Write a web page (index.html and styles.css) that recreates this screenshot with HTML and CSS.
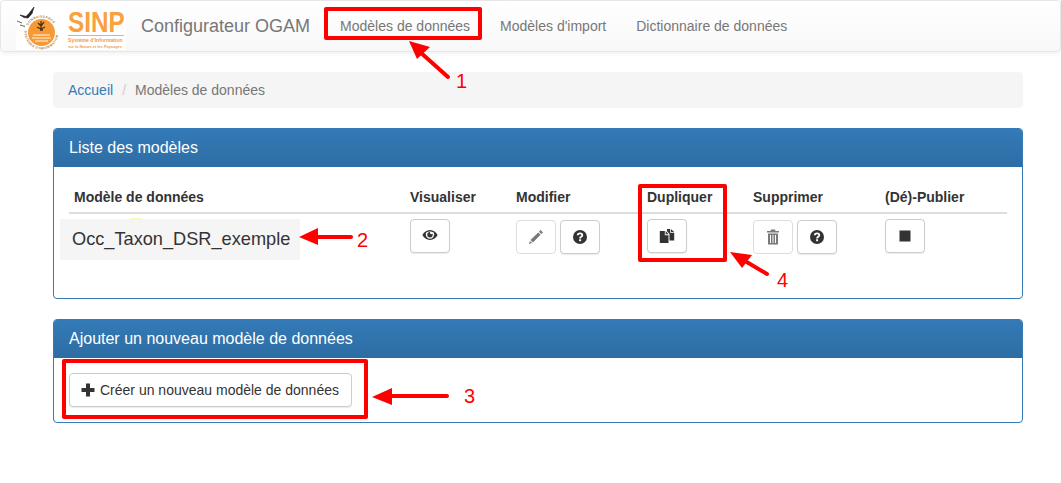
FILE: index.html
```html
<!DOCTYPE html>
<html lang="fr">
<head>
    <meta charset="UTF-8">
    <meta name="viewport" content="width=device-width, initial-scale=1.0">
    <title>Configurateur OGAM</title>
    <link rel="stylesheet" href="styles.css">
</head>
<body>

<svg class="icon-defs" width="0" height="0">
    <symbol id="i-eye" viewBox="0 0 16 16">
        <path fill-rule="evenodd" d="M8 3C4.600 3 1.900 5.200.4 8c1.500 2.800 4.200 5 7.600 5s6.100-2.200 7.600-5C14.100 5.200 11.400 3 8 3zm0 1.400c1.400 0 2.600.4 3.700 1.100.3.700.5 1.400.5 2.100a4.200 4.200 0 0 1-8.400 0c0-.7.2-1.400.5-2.100C5.400 4.800 6.600 4.400 8 4.400z"/>
        <path d="M8 5a2.700 2.700 0 1 0 2.700 2.700c0-.5-.1-.9-.4-1.300-.2.500-.6.800-1.100.8-.7 0-1.200-.6-1.200-1.200 0-.4.1-.7.4-1H8z"/>
    </symbol>
    <symbol id="i-pencil" viewBox="0 0 16 16">
        <path d="M12.600 1L15 3.400l-1.700 1.700-2.400-2.400zM10.200 3.400l2.400 2.400-7.700 7.700-2.400-2.400zM1.900 11.900l2.200 2.200-3.100.9z"/>
    </symbol>
    <symbol id="i-help" viewBox="0 0 16 16">
        <circle cx="8" cy="8" r="7"/>
        <path d="M5.700 6.200C5.800 4.900 6.800 4.300 8 4.300c1.300 0 2.300.7 2.300 1.900 0 1.700-2.200 1.600-2.200 3.200" fill="none" stroke="#fff" stroke-width="1.800"/>
        <rect x="7.100" y="10.300" width="2" height="1.900" fill="#fff"/>
    </symbol>
    <symbol id="i-duplicate" viewBox="0 0 16 16">
        <path d="M.8 3h5v4.200h3.700V15H.8z"/>
        <path d="M6.600 3l2.900 3.200H6.600z"/>
        <path d="M8 1h3v3.800h4.200V12.500h-4.700V6L8 3.200z"/>
        <path d="M11.800 1l3.400 3H11.800z"/>
    </symbol>
    <symbol id="i-trash" viewBox="0 0 16 16">
        <path d="M6 .5h4l.5 1.500H14v1.500H2V2h3.500z"/>
        <path fill-rule="evenodd" d="M3 4.400h10V15.500H3zM5 6v8h1V6zm2.500 0v8h1V6zM10 6v8h1V6z"/>
    </symbol>
    <symbol id="i-stop" viewBox="0 0 16 16">
        <rect x="2.500" y="2.500" width="11" height="11"/>
    </symbol>
    <symbol id="i-plus" viewBox="0 0 16 16">
        <path d="M6 1.500h4V6h4.500v4H10v4.500H6V10H1.500V6H6z"/>
    </symbol>
</svg>

<nav class="navbar">
    <a class="brand-logo" href="#">
        <svg width="110" height="48" viewBox="0 0 110 48">
            <defs>
                <path id="ring-top" d="M10.500 30.500a15 15 0 0 1 30 0"/>
                <path id="ring-bottom" d="M9.500 24.700A17 17 0 1 0 41.500 24.700"/>
            </defs>
            <rect width="110" height="48" fill="#fff"/>
            <circle cx="25.500" cy="30.500" r="13.500" fill="#f79a35"/>
            <path d="M25 19v9M22 21l3 3 3-4M21 25l4 2 4-2M24 28h3" fill="none" stroke="#4a3418" stroke-width="1.300"/>
            <path d="M17 33h17M16 36h19M19 39h13" stroke="#fff" stroke-width=".9"/>
            <path d="M4 13l6 1.500 3-3 5-6.500-2 6.500-4 4.500-4-.5zM1 19l5 2M4 23l5 1.500" fill="#222" stroke="#222" stroke-width=".7"/>
            <text class="logo-ring"><textPath href="#ring-top" startOffset="7">CONNAISSANCE</textPath><textPath href="#ring-bottom" startOffset="4">SYSTÈMES D'INFORMATION</textPath></text>
            <text class="logo-sinp" transform="translate(52 30) scale(.81 1)">SINP</text>
            <rect x="52" y="33" width="56" height=".8" fill="#f79a35"/>
            <text class="logo-sub" x="52" y="40">Système d'Information</text>
            <text class="logo-small" x="52" y="45.500">sur la Nature et les Paysages</text>
        </svg>
    </a>
    <a class="brand" href="#">Configurateur OGAM</a>
    <ul class="nav-links">
        <li><a href="#">Modèles de données</a></li>
        <li><a href="#">Modèles d'import</a></li>
        <li><a href="#">Dictionnaire de données</a></li>
    </ul>
</nav>

<main class="container">
    <ol class="breadcrumb">
        <li><a href="#">Accueil</a></li>
        <li class="crumb-sep">/</li>
        <li class="crumb-current">Modèles de données</li>
    </ol>

    <section class="panel">
        <h3 class="panel-heading">Liste des modèles</h3>
        <div class="panel-body">
            <table class="models">
                <thead>
                    <tr>
                        <th class="col-name">Modèle de données</th>
                        <th class="col-view">Visualiser</th>
                        <th class="col-edit">Modifier</th>
                        <th class="col-copy">Dupliquer</th>
                        <th class="col-del">Supprimer</th>
                        <th>(Dé)-Publier</th>
                    </tr>
                </thead>
                <tbody>
                    <tr>
                        <td><div class="model-name"><span class="model-dot"></span>Occ_Taxon_DSR_exemple</div></td>
                        <td><div class="btns"><a class="btn" href="#"><svg class="icon icon-eye"><use href="#i-eye"/></svg></a></div></td>
                        <td><div class="btns btns-low">
                            <a class="btn btn-off" href="#"><svg class="icon"><use href="#i-pencil"/></svg></a>
                            <a class="btn" href="#"><svg class="icon"><use href="#i-help"/></svg></a>
                        </div></td>
                        <td><div class="btns"><a class="btn" href="#"><svg class="icon"><use href="#i-duplicate"/></svg></a></div></td>
                        <td><div class="btns btns-low">
                            <a class="btn btn-off" href="#"><svg class="icon"><use href="#i-trash"/></svg></a>
                            <a class="btn" href="#"><svg class="icon"><use href="#i-help"/></svg></a>
                        </div></td>
                        <td><div class="btns"><a class="btn" href="#"><svg class="icon"><use href="#i-stop"/></svg></a></div></td>
                    </tr>
                </tbody>
            </table>
        </div>
    </section>

    <section class="panel">
        <h3 class="panel-heading">Ajouter un nouveau modèle de données</h3>
        <div class="panel-body">
            <a class="btn btn-text" href="#"><svg class="icon"><use href="#i-plus"/></svg>Créer un nouveau modèle de données</a>
        </div>
    </section>
</main>

<!-- annotations rouges par dessus la capture -->
<svg class="notes" width="1061" height="483" viewBox="0 0 1061 483">
    <g class="note-box">
        <rect x="326" y="9" width="154" height="29"/>
        <rect x="640" y="186" width="85" height="74"/>
        <rect x="64" y="361" width="302" height="56"/>
    </g>
    <g class="note-line">
        <path d="M420 52L448 77"/>
        <path d="M315 237H351"/>
        <path d="M388 396H447"/>
        <path d="M745 261L767 274"/>
    </g>
    <g class="note-head">
        <path d="M409 41L430 47L417 59z"/>
        <path d="M299 237L318 228V245z"/>
        <path d="M372 397L392 388V405z"/>
        <path d="M730 252L752 255L742 268z"/>
    </g>
    <text class="note-num" x="456" y="88">1</text>
    <text class="note-num" x="357" y="247">2</text>
    <text class="note-num" x="464" y="403">3</text>
    <text class="note-num" x="777" y="287">4</text>
</svg>

</body>
</html>
```

FILE: styles.css
```css
body {
    font-family: "Liberation Sans", Arial, sans-serif;
    font-size: 14px;
    line-height: 20px;
    margin: 0;
    padding: 0;
    background-color: #fff;
    color: #333;
}
a {
    text-decoration: none;
}
.icon-defs {
    position: absolute;
}

/* navbar */
.navbar {
    display: flex;
    align-items: center;
    box-sizing: border-box;
    height: 52px;
    margin-bottom: 20px;
    padding-left: 15px;
    background: linear-gradient(to bottom, #fff 0%, #f8f8f8 100%);
    border: 1px solid #e7e7e7;
    border-radius: 4px;
    box-shadow: 0 1px 5px rgba(0, 0, 0, .075);
}
.brand-logo {
    display: flex;
    width: 110px;
    height: 48px;
}
.logo-ring {
    font-size: 3.200px;
    font-weight: bold;
    letter-spacing: .4px;
    fill: #a5784a;
}
.logo-sinp {
    font-size: 30px;
    font-weight: bold;
    fill: #f9a13e;
}
.logo-sub {
    font-size: 5.100px;
    font-weight: bold;
    fill: #f79a35;
}
.logo-small {
    font-size: 3.900px;
    font-weight: bold;
    fill: #f0a050;
}
.brand {
    margin-left: 15px;
    margin-right: 15px;
    font-size: 18px;
    color: #777;
}
.nav-links {
    display: flex;
    list-style: none;
    margin: 0;
    padding: 0;
}
.nav-links a {
    display: block;
    padding: 0 15px;
    color: #777;
}

/* contenu */
.container {
    width: 970px;
    margin-left: 53px;
}
.breadcrumb {
    display: flex;
    list-style: none;
    margin: 0 0 20px;
    padding: 8px 15px;
    background-color: #f5f5f5;
    border-radius: 4px;
}
.breadcrumb a {
    color: #337ab7;
}
.crumb-sep {
    padding: 0 9px;
    color: #ccc;
}
.crumb-current {
    color: #777;
}

.panel {
    margin-bottom: 20px;
    background-color: #fff;
    border: 1px solid #337ab7;
    border-radius: 4px;
}
.panel-heading {
    margin: 0;
    padding: 10px 15px;
    font-size: 16px;
    font-weight: normal;
    line-height: 18px;
    color: #fff;
    background: linear-gradient(to bottom, #337ab7 0%, #2e6da4 100%);
    border-radius: 3px 3px 0 0;
}
.panel-body {
    padding: 15px;
}

/* tableau */
.models {
    width: 938px;
    margin-bottom: 18px;
    border-collapse: collapse;
    table-layout: fixed;
}
.models th {
    box-sizing: border-box;
    padding: 5px;
    text-align: left;
    border-bottom: 2px solid #ddd;
}
.models td {
    padding: 5px;
    vertical-align: top;
}
.col-name { width: 336px; }
.col-view { width: 106px; }
.col-edit { width: 131px; }
.col-copy { width: 106px; }
.col-del { width: 132px; }

.model-name {
    position: relative;
    box-sizing: border-box;
    width: 240px;
    height: 41px;
    margin-left: -14px;
    padding: 0 12px;
    font-size: 18.200px;
    line-height: 41px;
    white-space: nowrap;
    background-color: #f5f5f5;
}
.model-dot {
    position: absolute;
    left: 70px;
    top: -1px;
    width: 12px;
    height: 1px;
    background-color: #fbf7b5;
    border-radius: 6px 6px 0 0;
}

.btns {
    display: flex;
    gap: 4px;
}
.btns-low {
    margin-top: 1px;
}
.btn {
    display: flex;
    align-items: center;
    justify-content: center;
    box-sizing: border-box;
    width: 40px;
    height: 34px;
    color: #333;
    background-color: #fff;
    border: 1px solid #ccc;
    border-radius: 4px;
    box-shadow: 0 1px 1px rgba(0, 0, 0, .08);
}
.btn-off {
    opacity: .65;
    box-shadow: none;
}
.btn-text {
    justify-content: flex-start;
    width: 283px;
    padding-left: 10px;
}
.icon {
    width: 16px;
    height: 16px;
    fill: #333;
}
.icon-eye {
    margin-top: -3px;
}
.btn-text .icon {
    margin-right: 4px;
}

/* annotations */
.notes {
    position: absolute;
    left: 0;
    top: 0;
    pointer-events: none;
}
.note-box rect {
    fill: none;
    stroke: #f00;
    stroke-width: 4;
    stroke-linejoin: round;
}
.note-line path {
    fill: none;
    stroke: #f00;
    stroke-width: 4;
    stroke-linecap: round;
}
.note-head path {
    fill: #f00;
}
.note-num {
    font-size: 20px;
    fill: #f00;
}
```
